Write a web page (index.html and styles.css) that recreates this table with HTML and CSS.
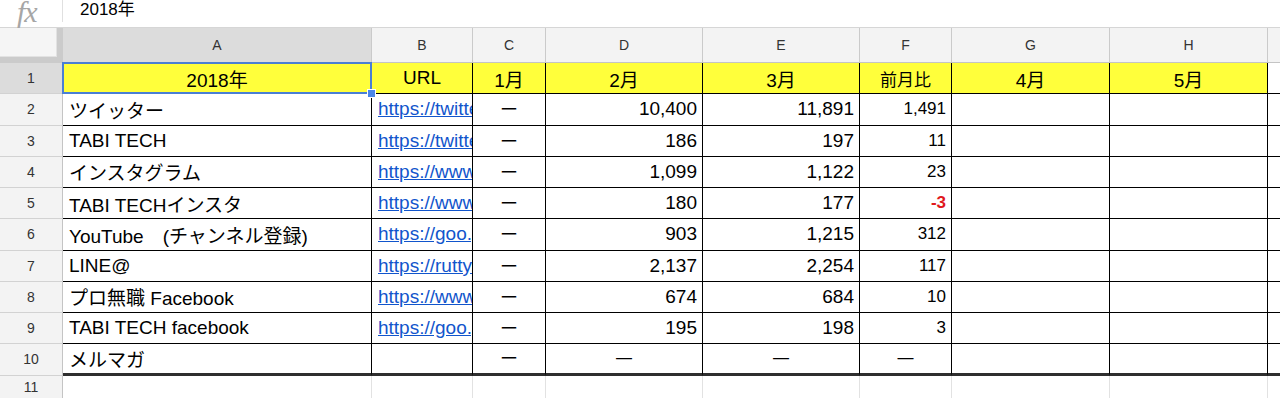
FILE: index.html
```html
<!DOCTYPE html>
<html lang="ja">
<head>
<meta charset="utf-8">
<title>Sheet</title>
<link rel="stylesheet" href="styles.css">
</head>
<body>
<div class="fbar">
  <div class="fx">fx</div>
  <div class="fsep"></div>
  <div class="fval">2018年</div>
</div>
<div class="sheet">
  <div class="corner"></div>
  <div class="h sel">A</div><div class="h">B</div><div class="h">C</div><div class="h">D</div><div class="h">E</div><div class="h">F</div><div class="h">G</div><div class="h">H</div><div class="h last"></div>

  <div class="rh sel">1</div>
  <div class="c y ctr a1">2018年<span class="selbox"></span><span class="handle"></span></div>
  <div class="c y ctr">URL</div><div class="c y ctr">1月</div><div class="c y ctr">2月</div><div class="c y ctr">3月</div><div class="c y ctr f">前月比</div><div class="c y ctr">4月</div><div class="c y ctr">5月</div><div class="c last"></div>

  <div class="rh">2</div>
  <div class="c">ツイッター</div><div class="c"><span class="lnk">https://twitter.com/</span></div><div class="c ctr dash">ー</div><div class="c r">10,400</div><div class="c r">11,891</div><div class="c r f">1,491</div><div class="c"></div><div class="c"></div><div class="c last"></div>

  <div class="rh">3</div>
  <div class="c">TABI TECH</div><div class="c"><span class="lnk">https://twitter.com/</span></div><div class="c ctr dash">ー</div><div class="c r">186</div><div class="c r">197</div><div class="c r f">11</div><div class="c"></div><div class="c"></div><div class="c last"></div>

  <div class="rh">4</div>
  <div class="c">インスタグラム</div><div class="c"><span class="lnk">https://www.instagram.com/</span></div><div class="c ctr dash">ー</div><div class="c r">1,099</div><div class="c r">1,122</div><div class="c r f">23</div><div class="c"></div><div class="c"></div><div class="c last"></div>

  <div class="rh">5</div>
  <div class="c">TABI TECHインスタ</div><div class="c"><span class="lnk">https://www.instagram.com/</span></div><div class="c ctr dash">ー</div><div class="c r">180</div><div class="c r">177</div><div class="c r f neg">-3</div><div class="c"></div><div class="c"></div><div class="c last"></div>

  <div class="rh">6</div>
  <div class="c">YouTube　(チャンネル登録)</div><div class="c"><span class="lnk">https://goo.gl/</span></div><div class="c ctr dash">ー</div><div class="c r">903</div><div class="c r">1,215</div><div class="c r f">312</div><div class="c"></div><div class="c"></div><div class="c last"></div>

  <div class="rh">7</div>
  <div class="c">LINE@</div><div class="c"><span class="lnk">https://rutty.jp/</span></div><div class="c ctr dash">ー</div><div class="c r">2,137</div><div class="c r">2,254</div><div class="c r f">117</div><div class="c"></div><div class="c"></div><div class="c last"></div>

  <div class="rh">8</div>
  <div class="c">プロ無職 Facebook</div><div class="c"><span class="lnk">https://www.facebook.com/</span></div><div class="c ctr dash">ー</div><div class="c r">674</div><div class="c r">684</div><div class="c r f">10</div><div class="c"></div><div class="c"></div><div class="c last"></div>

  <div class="rh">9</div>
  <div class="c">TABI TECH facebook</div><div class="c"><span class="lnk">https://goo.gl/</span></div><div class="c ctr dash">ー</div><div class="c r">195</div><div class="c r">198</div><div class="c r f">3</div><div class="c"></div><div class="c"></div><div class="c last"></div>

  <div class="rh">10</div>
  <div class="c b">メルマガ</div><div class="c b"></div><div class="c b ctr dash">ー</div><div class="c b ctr thin">—</div><div class="c b ctr thin">—</div><div class="c b ctr f thin">—</div><div class="c b"></div><div class="c b"></div><div class="c b last"></div>

  <div class="rh">11</div>
  <div class="e"></div><div class="e"></div><div class="e"></div><div class="e"></div><div class="e"></div><div class="e"></div><div class="e"></div><div class="e"></div><div class="e last"></div>
</div>
</body>
</html>
```
FILE: styles.css
```css
html, body {
  margin: 0;
  padding: 0;
}
body {
  width: 1280px;
  height: 398px;
  overflow: hidden;
  background: #fff;
  font-family: "Liberation Sans", "Noto Sans CJK JP", sans-serif;
  color: #000;
}

.fbar {
  height: 27px;
  border-bottom: 1px solid #d6d6d6;
  display: flex;
  align-items: flex-start;
}
.fx {
  width: 62px;
  box-sizing: border-box;
  padding-left: 17px;
  font-family: "Liberation Serif", serif;
  font-style: italic;
  font-size: 30px;
  line-height: 24px;
  height: 27px;
  color: #a6a6a6;
  letter-spacing: -1px;
}
.fsep {
  width: 1px;
  height: 22px;
  background: #e0e0e0;
}
.fval {
  padding-left: 17px;
  font-size: 17px;
  line-height: 19px;
}

.sheet {
  display: grid;
  grid-template-columns: 63px 309px 101px 73px 157px 157px 92px 158px 158px 12px;
  grid-template-rows: 35px repeat(10, 31.25px) 24px;
}

.corner {
  background: #f5f5f5;
  border-right: 6px solid #cbcbcb;
  border-bottom: 6px solid #cbcbcb;
  box-shadow: inset -1px -1px 0 #e2e2e2;
}

.h {
  background: #f3f3f3;
  border-right: 1px solid #cacaca;
  border-bottom: 1px solid #c4c4c4;
  display: flex;
  align-items: center;
  justify-content: center;
  font-size: 14px;
  color: #333;
}
.h.sel {
  background: #dcdcdc;
}
.h.last {
  border-right: none;
}

.rh {
  background: #f3f3f3;
  border-right: 1px solid #c4c4c4;
  border-bottom: 1px solid #d2d2d2;
  display: flex;
  align-items: center;
  justify-content: center;
  font-size: 14px;
  color: #333;
}
.rh.sel {
  background: #dcdcdc;
}

.c {
  box-sizing: border-box;
  border-right: 1px solid #000;
  border-bottom: 1px solid #000;
  display: flex;
  align-items: center;
  padding: 0 5px 0 6px;
  font-size: 19px;
  white-space: nowrap;
  overflow: hidden;
}
.c.last {
  border-right: none;
}
.c.y {
  background: #ffff3b;
}
.c.ctr {
  justify-content: center;
  padding: 0 2px;
}
.c.dash {
  font-size: 18px;
  line-height: 24px;
  padding-top: 2px;
}
.c.r {
  justify-content: flex-end;
}
.c.f {
  font-size: 17px;
}
.c.neg {
  color: #e0181c;
  font-weight: bold;
}
.c.b {
  border-bottom: 3px solid #2e2e2e;
}
.c.thin {
  font-size: 16px;
}

.lnk {
  color: #1155cc;
  text-decoration: underline;
}

.e {
  border-right: 1px solid #e2e2e2;
}
.e.last {
  border-right: none;
}

.a1 {
  position: relative;
  overflow: visible;
}
.selbox {
  position: absolute;
  left: -1px;
  top: -1px;
  right: -1px;
  bottom: -1px;
  border: 2px solid #4a7fd4;
  pointer-events: none;
}
.handle {
  position: absolute;
  right: -5px;
  bottom: -5px;
  width: 7px;
  height: 7px;
  background: #4a86e8;
  border: 1px solid #fff;
  z-index: 2;
}
```
